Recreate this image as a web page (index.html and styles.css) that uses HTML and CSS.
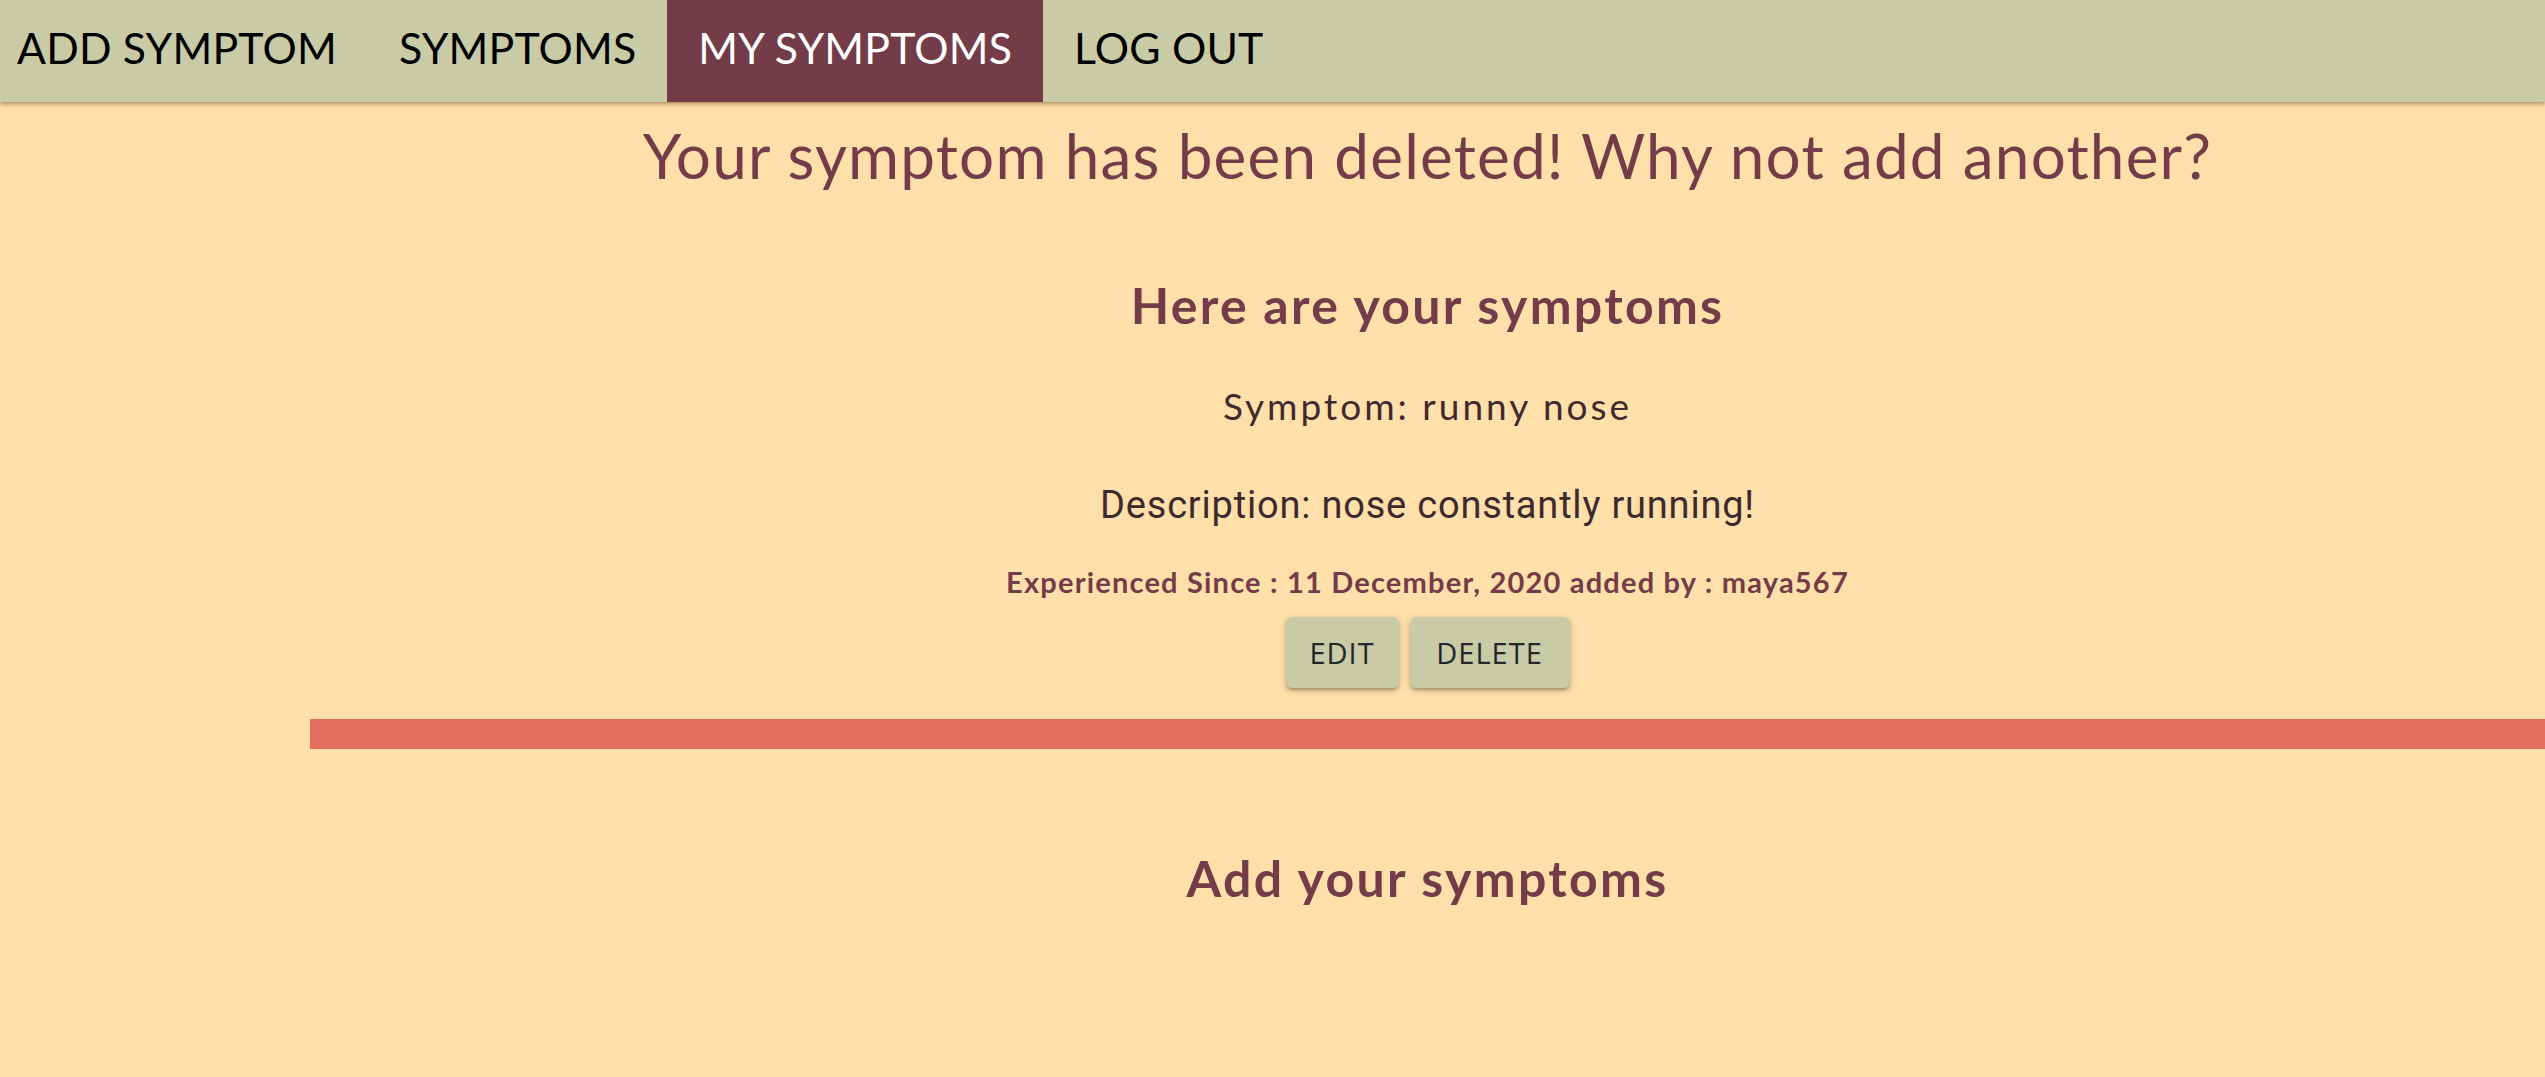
FILE: index.html
```html
<!DOCTYPE html>
<html lang="en">
<head>
<meta charset="utf-8">
<title>My Symptoms</title>
<link rel="stylesheet" href="styles.css">
</head>
<body>
<nav class="topnav">
  <a class="nav-link first" href="#">ADD SYMPTOM</a>
  <a class="nav-link" href="#">SYMPTOMS</a>
  <a class="nav-link active" href="#">MY SYMPTOMS</a>
  <a class="nav-link" href="#">LOG OUT</a>
</nav>
<div class="layout">
  <aside class="side"></aside>
  <main class="main">
    <h2 class="flash">Your symptom has been deleted! Why not add another?</h2>
    <h3 class="section-title list-title">Here are your symptoms</h3>
    <p class="symptom">Symptom: runny nose</p>
    <p class="desc">Description: nose constantly running!</p>
    <p class="meta">Experienced Since : 11 December, 2020 added by : maya567</p>
    <div class="actions">
      <a class="btn btn-edit" href="#">EDIT</a>
      <a class="btn btn-delete" href="#">DELETE</a>
    </div>
    <div class="divider"></div>
    <h3 class="section-title add-title">Add your symptoms</h3>
  </main>
</div>
</body>
</html>
```

FILE: styles.css
```css
html, body {
  margin: 0;
  padding: 0;
}
body {
  background: #ffe0aa;
  font-family: Lato, "Noto Sans", sans-serif;
  min-height: 1077px;
  overflow: hidden;
}
.topnav {
  height: 102px;
  background: #c8cba5;
  display: flex;
  align-items: stretch;
  box-shadow: 0 2px 3px rgba(90, 60, 20, 0.35), 0 3px 6px rgba(90, 60, 20, 0.15);
  position: relative;
  z-index: 2;
}
.nav-link {
  display: flex;
  align-items: center;
  padding: 0 31px 8px;
  font-size: 42.8px;
  color: #000;
  text-decoration: none;
  letter-spacing: 0.2px;
}
.nav-link.first {
  padding-left: 17px;
}
.nav-link.active {
  background: #733c48;
  color: #fff;
}
.layout {
  display: flex;
}
.side {
  width: 310px;
  flex: none;
}
.main {
  flex: 1;
  display: flex;
  flex-direction: column;
  align-items: center;
  text-align: center;
}
.flash {
  margin: 17px 0 0;
  font-size: 62px;
  line-height: 72px;
  font-weight: 400;
  letter-spacing: 1.2px;
  color: #733c48;
}
.section-title {
  margin: 0;
  font-size: 50px;
  line-height: 58px;
  font-weight: 700;
  letter-spacing: 2.3px;
  color: #733c48;
}
.list-title {
  margin-top: 85px;
}
.symptom {
  margin: 50px 0 0;
  font-size: 37px;
  line-height: 43px;
  letter-spacing: 3px;
  color: #42292d;
}
.desc {
  margin: 57px 0 0;
  font-family: Roboto, sans-serif;
  font-size: 38px;
  line-height: 42px;
  letter-spacing: 0.8px;
  color: #3d2a2c;
}
.meta {
  margin: 39px 0 0;
  font-size: 29px;
  line-height: 34px;
  font-weight: 700;
  letter-spacing: 1.2px;
  color: #733c48;
}
.actions {
  margin-top: 18px;
  display: flex;
  gap: 11px;
}
.btn {
  height: 71px;
  box-sizing: border-box;
  display: flex;
  align-items: center;
  justify-content: center;
  background: #c8cba5;
  border-radius: 6px;
  font-family: "Open Sans", sans-serif;
  font-size: 29px;
  letter-spacing: 1px;
  color: #24272a;
  text-decoration: none;
  box-shadow: 0 3px 3px rgba(0, 0, 0, 0.14), 0 4px 2px -3px rgba(0, 0, 0, 0.12), 0 2px 7px rgba(0, 0, 0, 0.2);
}
.btn-edit {
  width: 113px;
}
.btn-delete {
  width: 160px;
}
.divider {
  align-self: stretch;
  margin-top: 31px;
  height: 30px;
  background: #e36e5e;
}
.add-title {
  margin-top: 100px;
}
```
